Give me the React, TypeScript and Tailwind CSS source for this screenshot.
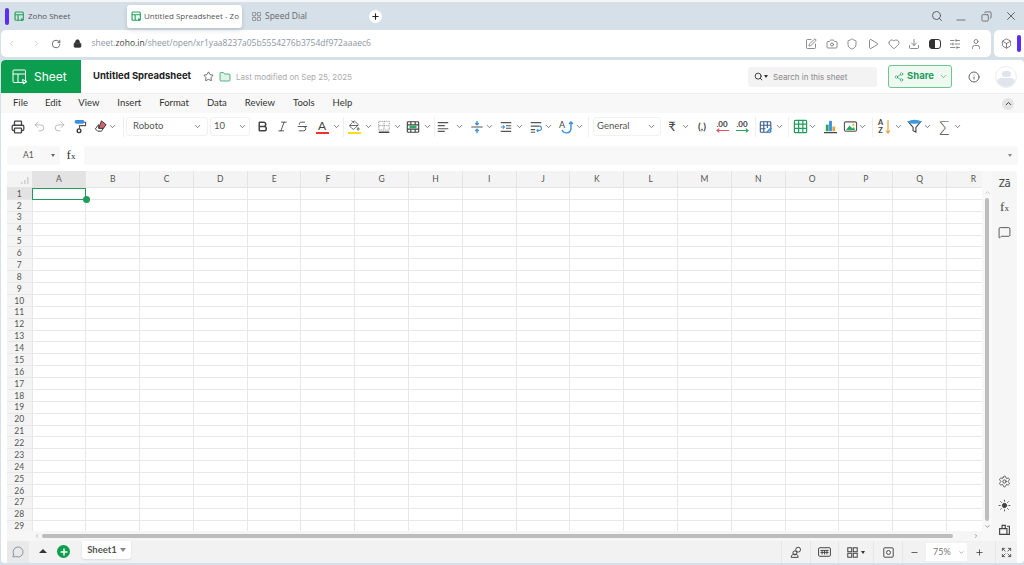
import React from "react";
import {
  Search, Minus, X, Copy, ChevronLeft, ChevronRight, RotateCw, Lock, SquarePen, Camera, Shield, Play, Heart, Download, SlidersHorizontal, User, Box, Star, Folder, Info, Share2, ChevronDown, ChevronUp, Printer, Undo2, Redo2, Bold, Italic, Strikethrough, PaintBucket, Plus, MessageSquare, MessageCircle, Expand, Settings, Sun,
} from "lucide-react";

const COLS = ["A","B","C","D","E","F","G","H","I","J","K","L","M","N","O","P","Q","R"];
const ROWS = Array.from({ length: 29 }, (_, i) => i + 1);

function SheetLogo({ cls = "w-[11px] h-[11px]" }: { cls?: string }) {
  return (
    <svg viewBox="0 0 16 16" className={cls} fill="none" stroke="#22a35a" strokeWidth="1.7">
      <rect x="1.5" y="1.5" width="12" height="12" rx="1.5" />
      <path d="M1.5 5.5h12M6 5.5v8" />
      <path d="M10 10l4.5 2.5L11 15z" fill="#22a35a" stroke="none" />
    </svg>
  );
}

function Chev({ cls = "" }: { cls?: string }) {
  return (
    <div className={`w-[8px] h-[9px] shrink-0 flex items-center justify-center ${cls}`}>
      <ChevronDown strokeWidth={1.8} className="w-[9px] h-[9px] shrink-0 text-[#444]" />
    </div>
  );
}
function Sep({ cls = "" }: { cls?: string }) {
  return <div className={`w-px h-[20px] bg-[#efefef] shrink-0 ${cls}`} />;
}
function Ti({ children, cls = "" }: { children: React.ReactNode; cls?: string }) {
  return <div className={`w-[16px] h-[16px] shrink-0 flex items-center justify-center text-[#444] ${cls}`}>{children}</div>;
}
const ic = "w-[13px] h-[13px]";
const bar = "w-[12px] h-[12px]";

function Lines({ color = "#555" }: { color?: string }) {
  return (
    <svg viewBox="0 0 16 16" className="w-[14px] h-[14px]" fill="none" stroke={color} strokeWidth="1.3">
      <path d="M2 3h12M2 6.500h8M2 10h12M2 13h8" />
    </svg>
  );
}

function Toolbar() {
  return (
    <div className="h-[27px] bg-white flex items-center pl-[9px] shrink-0 overflow-hidden">
      <Ti><Printer className="w-[14px] h-[14px]" strokeWidth={2.2} /></Ti>
      <Ti cls="ml-[5px] text-[#aaa]"><Undo2 className={ic} strokeWidth={1.4} /></Ti>
      <Ti cls="ml-[4px] text-[#aaa]"><Redo2 className={ic} strokeWidth={1.4} /></Ti>
      <Ti cls="ml-[4px]">
        <svg viewBox="0 0 16 16" className="w-[15px] h-[15px]">
          <rect x="3" y="1" width="10" height="4" rx="1.500" fill="#3b8fe0" />
          <path d="M13 3.500h1.500v3.500H8v3" fill="none" stroke="#555" strokeWidth="1.200" />
          <circle cx="7.500" cy="12.500" r="2" fill="none" stroke="#333" strokeWidth="1.400" />
        </svg>
      </Ti>
      <Ti cls="ml-[5px]">
        <svg viewBox="0 0 16 16" className="w-[15px] h-[15px]">
          <path d="M9 2l5 4-3 4H6z" fill="#d9606a" stroke="#333" strokeWidth="1" />
          <path d="M6 10l5 0-2 3H5L2.500 10.500 6 6z" fill="#fff" stroke="#333" strokeWidth="1" />
        </svg>
      </Ti>
      <Chev />
      <Sep cls="ml-[7px]" />
      <div className="ml-[2px] w-[82px] h-[19px] border border-[#f1f1f1] rounded-[3px] flex items-center justify-between pl-[6px] pr-[6px] text-[9.5px] text-[#555] shrink-0"><span>Roboto</span><Chev /></div>
      <div className="ml-[2px] w-[40px] h-[19px] border border-[#f1f1f1] rounded-[3px] flex items-center justify-between pl-[3px] pr-[3px] text-[9.5px] text-[#555] shrink-0"><span>10</span><Chev /></div>
      <Ti cls="ml-[4px]"><Bold className={ic} strokeWidth={2.8} /></Ti>
      <Ti cls="ml-[4px]"><Italic className={ic} strokeWidth={1.6} /></Ti>
      <Ti cls="ml-[4px]"><Strikethrough className={ic} strokeWidth={1.6} /></Ti>
      <Ti cls="ml-[4px]">
        <span className="text-[12px] leading-[13px] border-b-2 border-[#e33] w-[13px] text-center text-[#444]">A</span>
      </Ti>
      <Chev cls="ml-[2px]" />
      <Sep cls="ml-[3px]" />
      <Ti cls="ml-[2px]">
        <div className="flex flex-col items-center">
          <PaintBucket className="w-[11px] h-[11px]" strokeWidth={1.8} />
          <div className="w-[13px] h-[2px] bg-[#f5e020] mt-[1px]" />
        </div>
      </Ti>
      <Chev cls="ml-[2px]" />
      <Ti cls="ml-[4px]">
        <svg viewBox="0 0 16 16" className="w-[14px] h-[14px]" fill="none" stroke="#777" strokeWidth="1" strokeDasharray="1 1">
          <rect x="2" y="1.500" width="12" height="10" />
          <path d="M2 6.500h12M8 1.500v10" />
          <path d="M2 14h12" strokeDasharray="none" strokeWidth="1.500" stroke="#444" />
        </svg>
      </Ti>
      <Chev cls="ml-[1px]" />
      <Ti cls="ml-[4px]">
        <svg viewBox="0 0 16 16" className="w-[14px] h-[14px]" fill="none" stroke="#444" strokeWidth="1.300">
          <rect x="1.500" y="2" width="13" height="12" rx="1" />
          <path d="M1.500 5.500h13M1.500 10.500h13M5.500 2v3.500M10.500 2v3.500M5.500 10.500V14M10.500 10.500V14" />
          <rect x="4" y="6.500" width="8" height="3" fill="#2aa860" stroke="none" />
        </svg>
      </Ti>
      <Chev cls="ml-[2px]" />
      <Sep cls="ml-[3px]" />
      <Ti><Lines /></Ti>
      <Chev cls="ml-[4px]" />
      <Ti cls="ml-[6px]">
        <svg viewBox="0 0 16 16" className="w-[14px] h-[14px]" fill="none" stroke="#3b8fe0" strokeWidth="1.500">
          <path d="M8 1v4M6 3.500L8 5.500l2-2M8 15v-4M6 12.500L8 10.500l2 2" />
          <path d="M1.500 8h13" stroke="#555" strokeWidth="1.200" />
        </svg>
      </Ti>
      <Chev />
      <Ti cls="ml-[5px]">
        <svg viewBox="0 0 16 16" className="w-[14px] h-[14px]" fill="none" stroke="#555" strokeWidth="1.200">
          <path d="M2 3h12M8 6.500h6M8 9.500h6M2 13h12" />
          <path d="M2 8h4M4.500 6l1.800 2-1.800 2" stroke="#3b8fe0" />
        </svg>
      </Ti>
      <Chev cls="ml-[1px]" />
      <Ti cls="ml-[5px]">
        <svg viewBox="0 0 16 16" className="w-[14px] h-[14px]" fill="none" stroke="#555" strokeWidth="1.200">
          <path d="M2 3h12M2 7h10M2 11h5M2 14h5" />
          <path d="M12 7c3 0 3 5 0 5H9M10.500 10.500L9 12l1.500 1.500" stroke="#3b8fe0" />
        </svg>
      </Ti>
      <Chev />
      <Ti cls="ml-[7px]">
        <div className="relative w-[16px] h-[16px]">
          <span className="absolute left-0 top-0 text-[9px] leading-[11px] text-[#444]">A</span>
          <svg viewBox="0 0 16 16" className="w-[16px] h-[16px]" fill="none" stroke="#3b8fe0" strokeWidth="1.400">
            <path d="M3 11c2 4 8 4 9-1V3M10 5l2-2 2 2" />
          </svg>
        </div>
      </Ti>
      <Chev />
      <Sep cls="ml-[5px]" />
      <div className="ml-[4px] w-[68px] h-[19px] border border-[#f1f1f1] rounded-[3px] flex items-center justify-between pl-[3px] pr-[5px] text-[9.5px] text-[#555] shrink-0"><span>General</span><Chev /></div>
      <Ti cls="ml-[3px]"><span className="text-[13px]">₹</span></Ti>
      <Chev cls="ml-[1px]" />
      <Ti cls="ml-[5px]"><span className="text-[10px] font-bold whitespace-nowrap">(,)</span></Ti>
      <Ti cls="ml-[4px]">
        <div className="flex flex-col items-center leading-[8px]">
          <span className="text-[8px] font-bold">.00</span>
          <svg viewBox="0 0 14 5" className="w-[13px] h-[5px]" fill="none" stroke="#e0535b" strokeWidth="1.200"><path d="M14 2.500H1M3.500 .5L1 2.500l2.500 2" /></svg>
        </div>
      </Ti>
      <Ti cls="ml-[4px]">
        <div className="flex flex-col items-center leading-[8px]">
          <span className="text-[8px] font-bold">.00</span>
          <svg viewBox="0 0 14 5" className="w-[13px] h-[5px]" fill="none" stroke="#2aa860" strokeWidth="1.200"><path d="M0 2.500h13M10.500 .5l2.500 2-2.500 2" /></svg>
        </div>
      </Ti>
      <Sep cls="ml-[5px]" />
      <Ti cls="ml-[2px]">
        <svg viewBox="0 0 16 16" className="w-[14px] h-[14px]" fill="none" stroke="#3d5f8a" strokeWidth="1.300">
          <rect x="1.500" y="2" width="12" height="12" rx="1" />
          <path d="M1.500 6h12M5.500 2v12M9.500 2v7M1.500 10h6" />
          <path d="M9 14l5-5" stroke="#3b8fe0" strokeWidth="2" />
        </svg>
      </Ti>
      <Chev cls="ml-[1px]" />
      <Sep cls="ml-[5px]" />
      <Ti cls="ml-[3px]">
        <svg viewBox="0 0 16 16" className="w-[15px] h-[15px]" fill="none" stroke="#1f9d5b" strokeWidth="1.300">
          <rect x="1.500" y="1.500" width="13" height="13" rx="1" />
          <path d="M1.500 5.500h13M1.500 10h13M6 1.500v13M10.500 1.500v13" />
        </svg>
      </Ti>
      <Chev />
      <Ti cls="ml-[6px]">
        <svg viewBox="0 0 16 16" className="w-[15px] h-[15px]">
          <rect x="3" y="6" width="3" height="7" fill="#2aa860" />
          <rect x="6.500" y="2" width="3" height="11" fill="#3b8fe0" />
          <rect x="10" y="8" width="3" height="5" fill="#e8a33d" />
          <path d="M1 14.500h14" stroke="#444" strokeWidth="1.200" />
        </svg>
      </Ti>
      <Ti cls="ml-[4px]">
        <svg viewBox="0 0 16 16" className="w-[15px] h-[15px]">
          <rect x="1.500" y="3" width="13" height="10" rx="1.500" fill="none" stroke="#555" strokeWidth="1.200" />
          <path d="M3 12l4-5 3 3 1.500-1.500L13 12z" fill="#2aa860" />
          <circle cx="11" cy="6" r="1.300" fill="#e8c33d" />
        </svg>
      </Ti>
      <Chev />
      <Sep cls="ml-[6px]" />
      <Ti cls="ml-[3px]">
        <div className="w-[16px] h-[16px] flex">
          <span className="text-[7.5px] leading-[8px] font-bold text-[#444] text-center w-[9px]">A<br />Z</span>
          <svg viewBox="0 0 6 16" className="w-[6px] h-[16px]" fill="none" stroke="#e8a33d" strokeWidth="1.200"><path d="M3 1v13M1 11.500L3 14l2-2.500" /></svg>
        </div>
      </Ti>
      <Chev cls="ml-[2px]" />
      <Ti cls="ml-[4px]">
        <svg viewBox="0 0 16 16" className="w-[15px] h-[15px]" fill="none" stroke="#444" strokeWidth="1.200">
          <path d="M1.500 3h13L9.500 9v5l-3-1.500V9z" />
          <path d="M1.500 3c3-2 10-2 13 0-3 2-10 2-13 0z" fill="#3b9ae0" stroke="#3b9ae0" />
        </svg>
      </Ti>
      <Chev cls="ml-[1px]" />
      <Ti cls="ml-[5px]"><span className="text-[15px] leading-none font-light">∑</span></Ti>
      <Chev cls="ml-[1px]" />
    </div>
  );
}

function Grid() {
  return (
    <div className="flex-1 min-w-0 overflow-hidden relative">
      <div className="flex h-[17px] bg-[#f4f4f4] border-b border-[#e4e4e4]">
        <div className="w-[24.500px] shrink-0 flex items-end justify-end pr-[3px] pb-[3px]">
          <svg viewBox="0 0 8 8" className="w-[8px] h-[8px]" fill="#cfcfcf"><path d="M0 6h1.500v2H0zM3 4h1.500v4H3zM6 1h1.500v7H6z" /></svg>
        </div>
        {COLS.map((c) => (
          <div key={c} className={`w-[53.800px] shrink-0 border-l border-[#e4e4e4] flex items-center justify-center text-[8.500px] text-[#555] ${c === "A" ? "bg-[#e3e3e3]" : ""}`}>{c}</div>
        ))}
      </div>
      {ROWS.map((r) => (
        <div key={r} className="flex h-[11.875px] bg-white border-b border-[#e8e8e8] box-border">
          <div className={`w-[24.500px] shrink-0 flex items-center justify-center pt-[1px] text-[8.500px] leading-none text-[#555] ${r === 1 ? "bg-[#e3e3e3]" : "bg-[#f4f4f4]"}`}>{r}</div>
          {COLS.map((c) => (
            <div key={c} className="w-[53.800px] shrink-0 border-l border-[#e8e8e8]" />
          ))}
        </div>
      ))}
      <div className="absolute left-[24.500px] top-[17px] w-[54.500px] h-[12px] border border-[#1f9d5b]" />
      <div className="absolute left-[75.500px] top-[25px] w-[7px] h-[7px] rounded-full bg-[#1f9d5b]" />
    </div>
  );
}

export default function App() {
  return (
    <div className="w-[1024px] h-[565px] bg-[#d6e0e9] flex flex-col overflow-hidden text-[#333]" style={{ fontFamily: "Lato, 'Noto Sans', sans-serif" }}>
      {/* browser tabs */}
      <div className="h-[30px] shrink-0 flex border-t-2 border-[#f4f6f8] items-center pl-[5px] relative" style={{ fontFamily: "'Open Sans', sans-serif" }}>
        <div className="w-[4px] h-[17px] rounded-full bg-[#5a2df5] mt-[1px]" />
        <div className="ml-[5px] flex items-center gap-[3px] w-[113px] text-[8px] text-[#555]">
          <SheetLogo /><span>Zoho Sheet</span>
        </div>
        <div className="w-[115px] h-[23px] rounded-[3px] bg-white shadow-[0_2px_5px_rgba(0,0,0,0.15)] flex items-center pl-[4px] gap-[2px] text-[8px] text-[#555] overflow-hidden whitespace-nowrap">
          <SheetLogo cls="w-[11px] h-[11px] shrink-0" /><span>Untitled Spreadsheet - Zo</span>
        </div>
        <div className="ml-[10px] flex items-center gap-[4px] w-[117px] text-[8.500px] text-[#666]">
          <svg viewBox="0 0 12 12" className="w-[9px] h-[9px]" fill="none" stroke="#777" strokeWidth="1"><rect x=".5" y=".5" width="4.500" height="4.500" rx="1" /><rect x="7" y=".5" width="4.500" height="4.500" rx="1" /><rect x=".5" y="7" width="4.500" height="4.500" rx="1" /><rect x="7" y="7" width="4.500" height="4.500" rx="1" /></svg>
          <span>Speed Dial</span>
        </div>
        <div className="w-[13px] h-[13px] rounded-full bg-white flex items-center justify-center"><Plus className="w-[9px] h-[9px] text-[#222]" strokeWidth={3} /></div>
        <div className="flex-1" />
        <Search className="w-[12px] h-[12px] text-[#555]" strokeWidth={1.8} />
        <Minus className="ml-[11px] w-[14px] h-[14px] text-[#666] mt-[8px]" strokeWidth={1.5} />
        <Copy className="ml-[12.500px] w-[11px] h-[11px] text-[#555] -scale-x-100" strokeWidth={1.6} />
        <X className="ml-[12.500px] mr-[6px] w-[14px] h-[14px] text-[#555]" strokeWidth={1.5} />
      </div>
      {/* address bar */}
      <div className="h-[27px] shrink-0 flex gap-[3px] pl-[1px]">
        <div className="w-[990px] bg-white rounded-[5px] flex items-center pl-[6px] pr-[9px]" style={{ fontFamily: "'Open Sans', sans-serif" }}>
          <ChevronLeft className="w-[9px] h-[9px] text-[#bbb]" strokeWidth={1.8} />
          <ChevronRight className="ml-[16px] w-[9px] h-[9px] text-[#bbb]" strokeWidth={1.8} />
          <RotateCw className="ml-[10px] w-[10px] h-[10px] text-[#555]" strokeWidth={2} />
          <Lock className="ml-[11.500px] w-[9px] h-[9px] text-[#333] fill-[#333]" strokeWidth={2} />
          <div className="ml-[10px] text-[8.500px] text-[#8a96a3] whitespace-nowrap">sheet.<span className="text-[#444]">zoho.in</span>/sheet/open/xr1yaa8237a05b5554276b3754df972aaaec6</div>
          <div className="flex-1" />
          <div className="flex items-center gap-[8.600px] text-[#666]">
            <SquarePen className={bar} strokeWidth={1.5} />
            <Camera className={bar} strokeWidth={1.5} />
            <Shield className={bar} strokeWidth={1.5} />
            <Play className={bar} strokeWidth={1.5} />
            <Heart className={bar} strokeWidth={1.5} />
            <Download className={bar} strokeWidth={1.5} />
            <svg viewBox="0 0 12 10" className="w-[12px] h-[10px]"><rect x=".5" y=".5" width="11" height="9" rx="2.500" fill="none" stroke="#333" /><path d="M3 .5h3v9H3a2.500 2.500 0 01-2.500-2.500V3A2.500 2.500 0 013 .5z" fill="#333" /></svg>
            <SlidersHorizontal className={bar} strokeWidth={1.5} />
            <User className={bar} strokeWidth={1.5} />
          </div>
        </div>
        <div className="flex-1 bg-white rounded-l-[5px] flex items-center pl-[7px] gap-[5px]">
          <Box className="w-[11px] h-[11px] text-[#555]" strokeWidth={1.6} />
          <div className="w-[4px] h-[17px] rounded-full bg-[#5a2df5]" />
        </div>
      </div>
      {/* app */}
      <div className="mt-[3px] ml-[1px] h-[503px] shrink-0 bg-white rounded-[4px] flex flex-col overflow-hidden">
        <div className="h-[34px] shrink-0 flex items-center border-b border-[#f0f0f0]">
          <div className="w-[80px] h-full bg-[#0c9e4f] rounded-tl-[4px] flex items-center pl-[11px] gap-[6px] text-white text-[12px]" style={{ fontFamily: "Inter, sans-serif" }}>
            <svg viewBox="0 0 16 16" className="w-[16px] h-[16px]" fill="none" stroke="#fff" strokeWidth="1"><rect x="1" y="1" width="12.500" height="12.500" rx="1" /><path d="M1 5h12.500M6 5v8.500" /><path d="M10.500 10.500l4.500 2-3.500 2.500z" /></svg>
            <span>Sheet</span>
          </div>
          <div className="ml-[12px] text-[9.500px] font-bold text-[#222]" style={{ fontFamily: "Inter, sans-serif" }}>Untitled Spreadsheet</div>
          <Star className="ml-[12px] w-[11px] h-[11px] text-[#333]" strokeWidth={1.5} />
          <Folder className="ml-[5px] w-[12px] h-[12px] text-[#1f9d5b] fill-[#dff3e6]" strokeWidth={1.5} />
          <div className="ml-[5px] text-[8px] text-[#aaa]" style={{ fontFamily: "Inter, sans-serif" }}>Last modified on Sep 25, 2025</div>
          <div className="flex-1" />
          <div className="w-[129px] h-[20px] bg-[#f3f3f3] rounded-[3px] flex items-center pl-[6px] text-[8px] text-[#888]" style={{ fontFamily: "Inter, sans-serif" }}>
            <Search className="w-[9px] h-[9px] text-[#333]" strokeWidth={2.5} />
            <div className="ml-[1px] w-0 h-0 border-x-[2px] border-t-[3px] border-x-transparent border-t-[#333]" />
            <span className="ml-[5px]">Search in this sheet</span>
          </div>
          <div className="ml-[11px] w-[64px] h-[23px] bg-[#eff9f2] border border-[#6cc78f] rounded-[3px] flex items-center pl-[5px] gap-[3px] text-[#1f9d5b] text-[9.500px] font-bold" style={{ fontFamily: "Inter, sans-serif" }}>
            <Share2 className="w-[10px] h-[10px]" strokeWidth={1.5} />
            <span>Share</span>
            <ChevronDown className="ml-[2px] w-[9px] h-[9px]" strokeWidth={1.5} />
          </div>
          <Info className="ml-[16px] w-[12px] h-[12px] text-[#333]" strokeWidth={1.5} />
          <div className="ml-[15px] mr-[7px] w-[22px] h-[22px] rounded-full border border-[#eee] bg-white overflow-hidden flex flex-col items-center">
            <div className="mt-[4px] w-[9px] h-[9px] rounded-full bg-[#dfe4ee]" />
            <div className="mt-[1px] w-[18px] h-[12px] rounded-full bg-[#dfe4ee]" />
          </div>
        </div>
        <div className="h-[19px] shrink-0 bg-[#f8f8f8] flex items-center text-[9.500px] text-[#333] relative">
          <span className="ml-[12px]">File</span>
          <span className="ml-[17px]">Edit</span>
          <span className="ml-[17px]">View</span>
          <span className="ml-[18px]">Insert</span>
          <span className="ml-[18px]">Format</span>
          <span className="ml-[18px]">Data</span>
          <span className="ml-[18px]">Review</span>
          <span className="ml-[18px]">Tools</span>
          <span className="ml-[18px]">Help</span>
          <div className="ml-auto mr-[10px] w-[12px] h-[12px] rounded-full bg-[#e4e4e4] flex items-center justify-center"><ChevronUp className="w-[9px] h-[9px] text-[#333]" strokeWidth={2.5} /></div>
        </div>
        <Toolbar />
        <div className="h-[31px] shrink-0 bg-white flex items-center pl-[6px] pr-[6px]">
          <div className="w-[53px] h-[19px] bg-[#f8f8f8] rounded-[3px] flex items-center justify-between pl-[16px] pr-[5px] text-[8.500px] text-[#555]">
            <span>A1</span>
            <div className="w-0 h-0 border-x-[2.500px] border-t-[3px] border-x-transparent border-t-[#666]" />
          </div>
          <div className="w-[22px] text-center text-[13px] leading-[15px] text-[#333]" style={{ fontFamily: "'Liberation Serif', serif" }}>f<span className="text-[9px]">x</span></div>
          <div className="ml-[2px] flex-1 h-[19px] bg-[#f8f8f8] rounded-[3px] flex items-center justify-end pr-[6px]">
            <div className="w-0 h-0 border-x-[2.500px] border-t-[3px] border-x-transparent border-t-[#888]" />
          </div>
        </div>
        {/* sheet */}
        <div className="ml-[6px] mr-[7px] flex-1 min-h-0 bg-[#f6f6f6] rounded-t-[4px] flex flex-col">
          <div className="flex flex-1 min-h-0">
            <div className="w-[975px] shrink-0 flex flex-col min-h-0">
              <Grid />
              <div className="h-[10px] shrink-0 bg-[#f6f6f6] flex items-center pl-[27px] pr-[3px]">
                <ChevronLeft className="w-[6px] h-[6px] text-[#888]" strokeWidth={2} />
                <div className="ml-[2px] flex-1 h-[4px] bg-[#bdbdbd] rounded-full" />
                <ChevronRight className="ml-[20px] w-[6px] h-[6px] text-[#555]" strokeWidth={2} />
              </div>
            </div>
            <div className="w-[10px] shrink-0 bg-[#f8f8f8] flex flex-col items-center pt-[18px] pb-[11px]">
              <ChevronUp className="w-[7px] h-[7px] text-[#aaa]" strokeWidth={2} />
              <div className="mt-[2px] w-[4px] flex-1 bg-[#bdbdbd] rounded-full" />
              <ChevronDown className="mt-[2px] w-[7px] h-[7px] text-[#555]" strokeWidth={2} />
            </div>
            <div className="flex-1 flex flex-col items-center pt-[5px] pb-[5px] text-[#555]">
              <span className="text-[11px] leading-[13px] text-[#444] tracking-[-0.5px]" style={{ fontFamily: "'Noto Sans', sans-serif" }}>Zā</span>
              <div className="mt-[11px] text-[13px] leading-[13px] text-[#444]" style={{ fontFamily: "'Liberation Serif', serif" }}>f<span className="text-[9px]">x</span></div>
              <MessageSquare className="mt-[11px] w-[13px] h-[13px] text-[#444]" strokeWidth={1.6} />
              <div className="flex-1" />
              <Settings className="w-[13px] h-[13px] text-[#444]" strokeWidth={1.6} />
              <Sun className="mt-[11px] w-[13px] h-[13px] text-[#444] fill-[#444]" strokeWidth={1.6} />
              <svg viewBox="0 0 16 16" className="mt-[11px] w-[13px] h-[13px]" fill="none" stroke="#444" strokeWidth="1.400"><path d="M2 7h9v7H2zM5 7V3h4v4M11 4h3v10h-3" /></svg>
            </div>
          </div>
          <div className="h-[22px] shrink-0 bg-[#f2f2f2] flex items-start text-[#555]">
            <div className="w-[22px] h-full bg-[#e9e9e9] flex items-center justify-center">
              <MessageCircle className="w-[12px] h-[12px] text-[#5f7f8c]" strokeWidth={1.5} />
            </div>
            <div className="ml-[10px] mt-[8px] w-0 h-0 border-x-[4px] border-b-[4px] border-x-transparent border-b-[#333]" />
            <div className="ml-[10px] mt-[4px] w-[13px] h-[13px] rounded-full bg-[#0c9e4f] flex items-center justify-center">
              <Plus className="w-[10px] h-[10px] text-white" strokeWidth={3.5} />
            </div>
            <div className="ml-[12px] w-[49px] h-[18px] bg-white rounded-b-[3px] shadow-[0_1px_2px_rgba(0,0,0,0.1)] flex items-center justify-center gap-[3px] text-[9.500px] font-bold text-[#555]">
              <span>Sheet1</span>
              <div className="w-0 h-0 border-x-[3.500px] border-t-[4px] border-x-transparent border-t-[#888]" />
            </div>
            <div className="flex-1" />
            <div className="h-full flex items-center">
              <div className="w-[29px] h-full border-l border-[#e6e6e6] flex items-center justify-center">
                <svg viewBox="0 0 16 16" className="w-[13px] h-[13px]" fill="none" stroke="#444" strokeWidth="1.200"><circle cx="10" cy="4.500" r="3" /><circle cx="6" cy="8.500" r="2.500" /><path d="M1.500 14c0-3 2-4 4.500-4s4 1 4 4z" /></svg>
              </div>
              <div className="w-[28px] h-full border-l border-[#e6e6e6] flex items-center justify-center">
                <svg viewBox="0 0 16 12" className="w-[13px] h-[10px]" fill="none" stroke="#444" strokeWidth="1.200"><rect x=".7" y=".7" width="14.600" height="10.600" rx="1.500" /><path d="M3 4h10M3 6.500h10M5 4v5M8 4v5M11 4v5" /></svg>
              </div>
              <div className="w-[35px] h-full border-l border-[#e6e6e6] flex items-center justify-center gap-[3px]">
                <svg viewBox="0 0 14 14" className="w-[11px] h-[11px]" fill="none" stroke="#444" strokeWidth="1.300"><rect x="1" y="1" width="5" height="5" /><rect x="8" y="1" width="5" height="5" /><rect x="1" y="8" width="5" height="5" /><rect x="8" y="8" width="5" height="5" /></svg>
                <div className="w-0 h-0 border-x-[2.500px] border-t-[3px] border-x-transparent border-t-[#333]" />
              </div>
              <div className="w-[29px] h-full border-l border-[#e6e6e6] flex items-center justify-center">
                <svg viewBox="0 0 14 14" className="w-[11px] h-[11px]" fill="none" stroke="#444" strokeWidth="1.200"><rect x="1" y="1" width="12" height="12" rx="1" /><circle cx="7" cy="7" r="2.500" /></svg>
              </div>
              <div className="w-[93px] h-full border-l border-[#e6e6e6] flex items-center pl-[7px]">
                <Minus className="w-[9px] h-[9px] text-[#333]" strokeWidth={2} />
                <div className="ml-[7px] w-[41px] h-[18px] bg-white flex items-center justify-between pl-[7px] pr-[2px] text-[9px] text-[#777]">
                  <span>75%</span>
                  <ChevronDown className="w-[7px] h-[7px]" strokeWidth={1.8} />
                </div>
                <Plus className="ml-[8px] w-[9px] h-[9px] text-[#333]" strokeWidth={2} />
              </div>
              <div className="w-[22px] h-full border-l border-[#e6e6e6] flex items-center justify-center">
                <Expand className="w-[11px] h-[11px] text-[#444]" strokeWidth={1.8} />
              </div>
            </div>
          </div>
        </div>
      </div>
    </div>
  );
}
